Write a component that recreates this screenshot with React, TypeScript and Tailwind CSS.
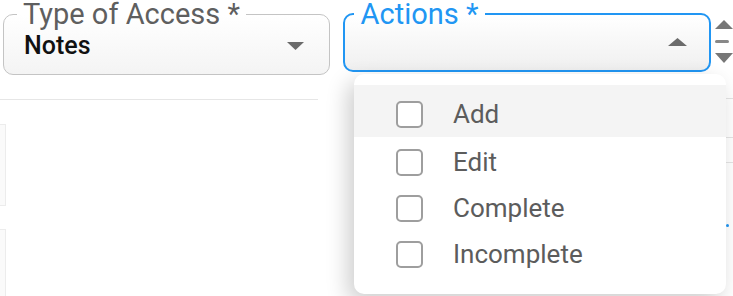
const items = ["Add", "Edit", "Complete", "Incomplete"]

const Checkbox = () => (
    <div className="w-[27px] h-[27px] rounded-[5px] border-[2.5px] border-[#9e9e9e] bg-white shrink-0"></div>
)

export default function App() {
    return (
        <div className="relative w-[733px] h-[296px] overflow-hidden bg-white font-['Roboto',sans-serif]">

            {/* fields row */}
            <div className="flex items-start">

                {/* type of access */}
                <fieldset className="ml-[3px] w-[328px] h-[75px] rounded-[10px] border border-[#c4c4c4] bg-gradient-to-b from-white to-[#f4f4f4] px-[13px]">
                    <legend className="px-[6px] text-[29px] leading-[28px] text-[#5f5f5f]">Type of Access *</legend>
                    <div className="flex items-center justify-between pl-[7px] pr-[12px] h-[36px]">
                        <span className="text-[25px] font-medium leading-[30px] text-[#111]">Notes</span>
                        <svg width="17" height="8" viewBox="0 0 17 8"><path d="M0 0h17L8.5 8z" fill="#6b6b6b" /></svg>
                    </div>
                </fieldset>

                {/* actions */}
                <fieldset className="ml-[13px] w-[370px] h-[72px] rounded-[10px] border-2 border-[#2196f3] bg-gradient-to-b from-white to-[#f0f0f0] px-[9px]">
                    <legend className="px-[7px] text-[29px] leading-[28px] text-[#2196f3]">Actions *</legend>
                    <div className="flex items-center justify-end pr-[13px] h-[28px]">
                        <svg width="19" height="8" viewBox="0 0 19 8"><path d="M0 8h19L9.5 0z" fill="#6b6b6b" /></svg>
                    </div>
                </fieldset>

                {/* spinner */}
                <div className="ml-[4px] mt-[20px] w-[18px] shrink-0 flex flex-col items-start">
                    <svg width="18" height="9" viewBox="0 0 18 9"><path d="M0 9h18L9 0z" fill="#777" /></svg>
                    <div className="mt-[11px] w-[14px] h-[3px] rounded bg-[#888]"></div>
                    <svg className="mt-[10px]" width="18" height="10" viewBox="0 0 18 10"><path d="M0 0h18L9 10z" fill="#777" /></svg>
                </div>
            </div>

            {/* line */}
            <div className="w-[318px] mt-[24px] border-t border-[#e6e6e6]"></div>

            {/* table edge */}
            <div className="mt-[24px] flex flex-col w-[6px]">
                <div className="h-[81px] border-t border-r border-[#ececec] bg-[#fafafa]"></div>
                <div className="h-[24px] border-t border-[#ececec]"></div>
                <div className="h-[70px] border-t border-r border-[#ececec] bg-[#fafafa]"></div>
            </div>

            {/* behind menu, right side rows */}
            <div className="absolute left-[726px] top-[98px] w-[7px] flex flex-col">
                <div className="h-[39px] border-t border-[#e4e4e4]"></div>
                <div className="h-[25px] border-t border-[#e4e4e4]"></div>
                <div className="h-[16px] border-t border-[#e4e4e4]"></div>
                <div className="mt-[46px] w-[3px] h-[3px] rounded-full bg-[#2196f3]"></div>
            </div>

            {/* menu */}
            <div className="absolute left-[354px] top-[74px] w-[372px] h-[220px] rounded-[10px] bg-white shadow-[-6px_8px_22px_rgba(0,0,0,0.2)] pt-[11px]">
                {items.map((item, i) => (
                    <div
                        key={item}
                        className={i === 0
                            ? "flex items-center h-[52px] pt-[6px] pl-[42px] gap-[30px] bg-[#f4f4f4]"
                            : "flex items-center h-[46px] pt-[4px] pl-[42px] gap-[30px]"}
                    >
                        <Checkbox />
                        <span className="text-[26px] leading-[30px] text-[#5c5c5c]">{item}</span>
                    </div>
                ))}
            </div>
        </div>
    )
}
